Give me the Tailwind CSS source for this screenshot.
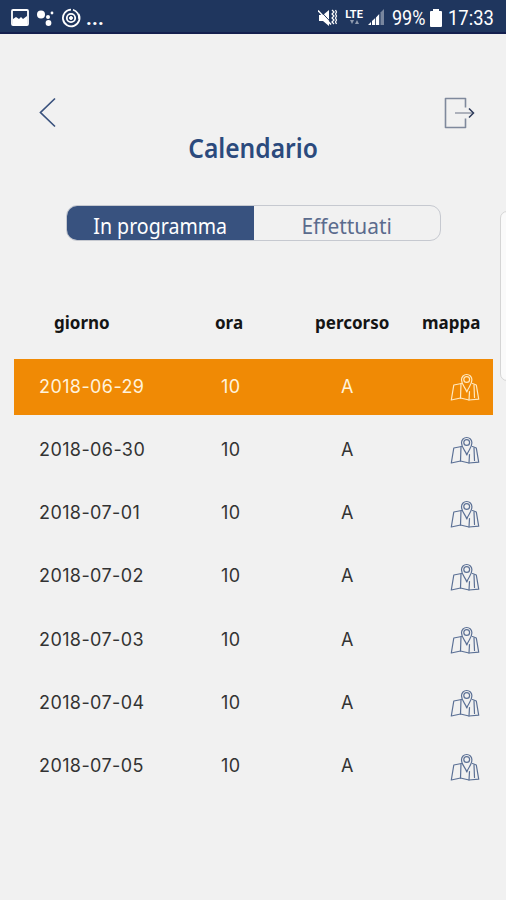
<!DOCTYPE html>
<html lang="it">
<head>
  <meta charset="UTF-8" />
  <meta name="viewport" content="width=device-width, initial-scale=1.0" />
  <title>Calendario</title>
  <script src="https://cdn.jsdelivr.net/npm/@tailwindcss/browser@4"></script>
</head>
<body class="bg-[#f1f1f1] font-['Roboto','Noto_Sans',sans-serif]">
  <!-- Shared map icon -->
  <svg class="hidden">
    <symbol id="map-icon" viewBox="0 0 30 32">
      <g fill="none" stroke="currentColor" stroke-width="1.2" stroke-linejoin="round" stroke-linecap="round">
        <path d="M11.500 13.500 3.800 15 1.300 30l9.200-2 8.500 2 9.700-.8L26.300 15 22.500 13.500" />
        <path d="M11 13.500 10.500 28M19.500 21.500 19 30M24 15l.5 12.500" />
        <path d="M16.800 22c-1.300-4.500-5.300-7-5.300-12.300a5.200 5.200 0 0 1 10.400 0C21.900 15 18.100 17.500 16.800 22z" />
        <circle cx="16.700" cy="9.500" r="2.900" />
      </g>
    </symbol>
  </svg>

  <div class="relative flex h-[900px] w-[506px] flex-col overflow-hidden">
    <!-- Status bar -->
    <div class="flex h-[34px] shrink-0 items-center border-b-2 border-[#14204f] bg-[#1f365e] pt-[3px] pr-3 pl-[11px] text-white">
      <svg class="h-[18px] w-[18px]" viewBox="0 0 18 18">
        <rect x="1" y="1" width="16" height="15" rx="1" fill="none" stroke="currentColor" stroke-width="1.800" />
        <path d="M2 16V10l3-2 3 2 2-2 2 2 4-3v9z" fill="currentColor" />
      </svg>
      <svg class="ml-[7px] h-[18px] w-[18px]" viewBox="0 0 18 18" fill="currentColor">
        <circle cx="5" cy="5.500" r="4" /><circle cx="12" cy="8" r="2" /><circle cx="12.500" cy="14" r="2.900" /><circle cx="16" cy="4" r="1.400" />
      </svg>
      <svg class="ml-[7px] h-5 w-5" viewBox="0 0 20 20" fill="none" stroke="currentColor">
        <path d="M10 1.700A8.300 8.300 0 1 0 17.500 6" stroke-width="1.800" />
        <path d="M12 1.800a8.300 8.300 0 0 1 6 9" stroke-width="1.600" />
        <circle cx="10" cy="10" r="4.200" stroke-width="1.800" /><circle cx="10" cy="10" r="1.500" fill="currentColor" />
      </svg>
      <span class="ml-[5px] text-xl leading-5 font-bold tracking-[0.2px]">...</span>

      <svg class="ml-auto h-[18px] w-[20px]" viewBox="0 0 20 18">
        <path d="M1 6h4l6-5v16l-6-5H1z" fill="currentColor" />
        <path d="M1.500 1l13 14" stroke="#1f365e" stroke-width="1" />
        <path d="M0 1.500 13 15.500" stroke="currentColor" stroke-width="1.500" />
        <path d="M14 1l2 2-2 2 2 2-2 2 2 2-2 2 2 2M17.500 1l1 2-1 2 1 2-1 2 1 2-1 2 1 2" fill="none" stroke="currentColor" stroke-width="1.200" />
      </svg>
      <div class="ml-[7px] flex h-[18px] w-[18px] flex-col items-center">
        <span class="text-[11px] leading-[11px] font-bold">LTE</span>
        <svg class="h-[5px] w-[9px] opacity-50" viewBox="0 0 9 5" fill="currentColor"><path d="M0 0h4L2 4zM5 4h4L7 0z" /></svg>
      </div>
      <svg class="ml-[5px] h-[17px] w-[17px]" viewBox="0 0 17 17" fill="currentColor">
        <path d="M0 16h3v-3zM4 16h3.200V9L4 12zM8 16h3.200V5L8 8.500z" />
        <path d="M12.500 16H16V0l-3.500 3.500z" opacity=".4" />
      </svg>
      <span class="ml-[7px] w-[35px] origin-left scale-x-[.9] text-xl leading-5 whitespace-nowrap">99%</span>
      <svg class="ml-[3px] h-[18px] w-3" viewBox="0 0 12 18" fill="currentColor">
        <path d="M3 0h6v2H11a1 1 0 0 1 1 1v14a1 1 0 0 1-1 1H1a1 1 0 0 1-1-1V3a1 1 0 0 1 1-1h2z" />
      </svg>
      <span class="ml-[6px] w-[46px] origin-left scale-x-[.92] text-xl leading-5 whitespace-nowrap">17:33</span>
    </div>

    <!-- Header -->
    <header class="flex h-[95px] shrink-0 items-end justify-between pr-[30px] pl-[38px]">
      <svg class="h-8 w-5" viewBox="0 0 20 32" fill="none" stroke="#3a527d" stroke-width="1.700">
        <path d="M17 1.500 2.500 15.500 17 29.500" />
      </svg>
      <svg class="h-8 w-8" viewBox="0 0 32 32" fill="none">
        <path d="M21.500 10.500V1.500H1.500V30.500H21.500V21.500" stroke="#7f899c" stroke-width="1.600" stroke-linejoin="round" />
        <path d="M11 16H29" stroke="#a5aab5" stroke-width="1.800" />
        <path d="M25 11.500 29.500 16 25 20.500" stroke="#2c3a5a" stroke-width="1.500" />
      </svg>
    </header>

    <h1 class="mt-[1px] scale-x-[.91] text-center font-['Noto_Sans'] text-[27px] leading-9 font-semibold text-[#2b4a7d]">Calendario</h1>

    <!-- Tabs -->
    <div class="mt-[39px] ml-[66px] flex h-9 w-[375px] shrink-0 overflow-hidden rounded-[11px] border border-[#c6c9d0] font-['Noto_Sans'] text-[22px] leading-[38px] whitespace-nowrap">
      <button class="flex w-[187px] justify-center bg-[#38527f] text-white"><span class="scale-x-[.89]">In programma</span></button>
      <button class="flex flex-1 justify-center text-[#5b6b8d]"><span class="scale-x-[.95]">Effettuati</span></button>
    </div>

    <!-- Table -->
    <div class="mt-[70px] grid h-6 shrink-0 grid-cols-[161px_100px_107px_auto] pl-[54px] font-['Noto_Sans'] text-[17px] leading-6 font-bold text-[#151515]">
      <span>giorno</span>
      <span>ora</span>
      <span>percorso</span>
      <span>mappa</span>
    </div>
    <div id="rows" class="mt-6 flex flex-col gap-[7.3px] pr-[13px] pl-[14px]"></div>

    <!-- Edge panel handle -->
    <div class="absolute top-[211px] -right-2 h-[170px] w-[14px] rounded-lg border border-[#d5d5d5] bg-[#fafafa]"></div>
  </div>

  <script>
    const days = [
      "2018-06-29",
      "2018-06-30",
      "2018-07-01",
      "2018-07-02",
      "2018-07-03",
      "2018-07-04",
      "2018-07-05",
    ];
    const rows = document.getElementById("rows");

    days.forEach((day, i) => {
      const active = i === 0;
      const row = document.createElement("div");
      row.className =
        "grid h-14 grid-cols-[182px_120px_109px_auto] items-center pb-[2px] pl-[25px] font-['Inter'] text-[18px] tracking-[0.4px] " +
        (active ? "bg-[#f08a05] text-[#fff3dc]" : "text-[#333333]");
      row.innerHTML = `
        <span>${day}</span>
        <span>10</span>
        <span>A</span>
        <svg class="h-8 w-[30px] ${active ? "text-[#ffe9c0]" : "text-[#5b7095]"}"><use href="#map-icon" /></svg>`;
      rows.appendChild(row);
    });
  </script>
</body>
</html>
